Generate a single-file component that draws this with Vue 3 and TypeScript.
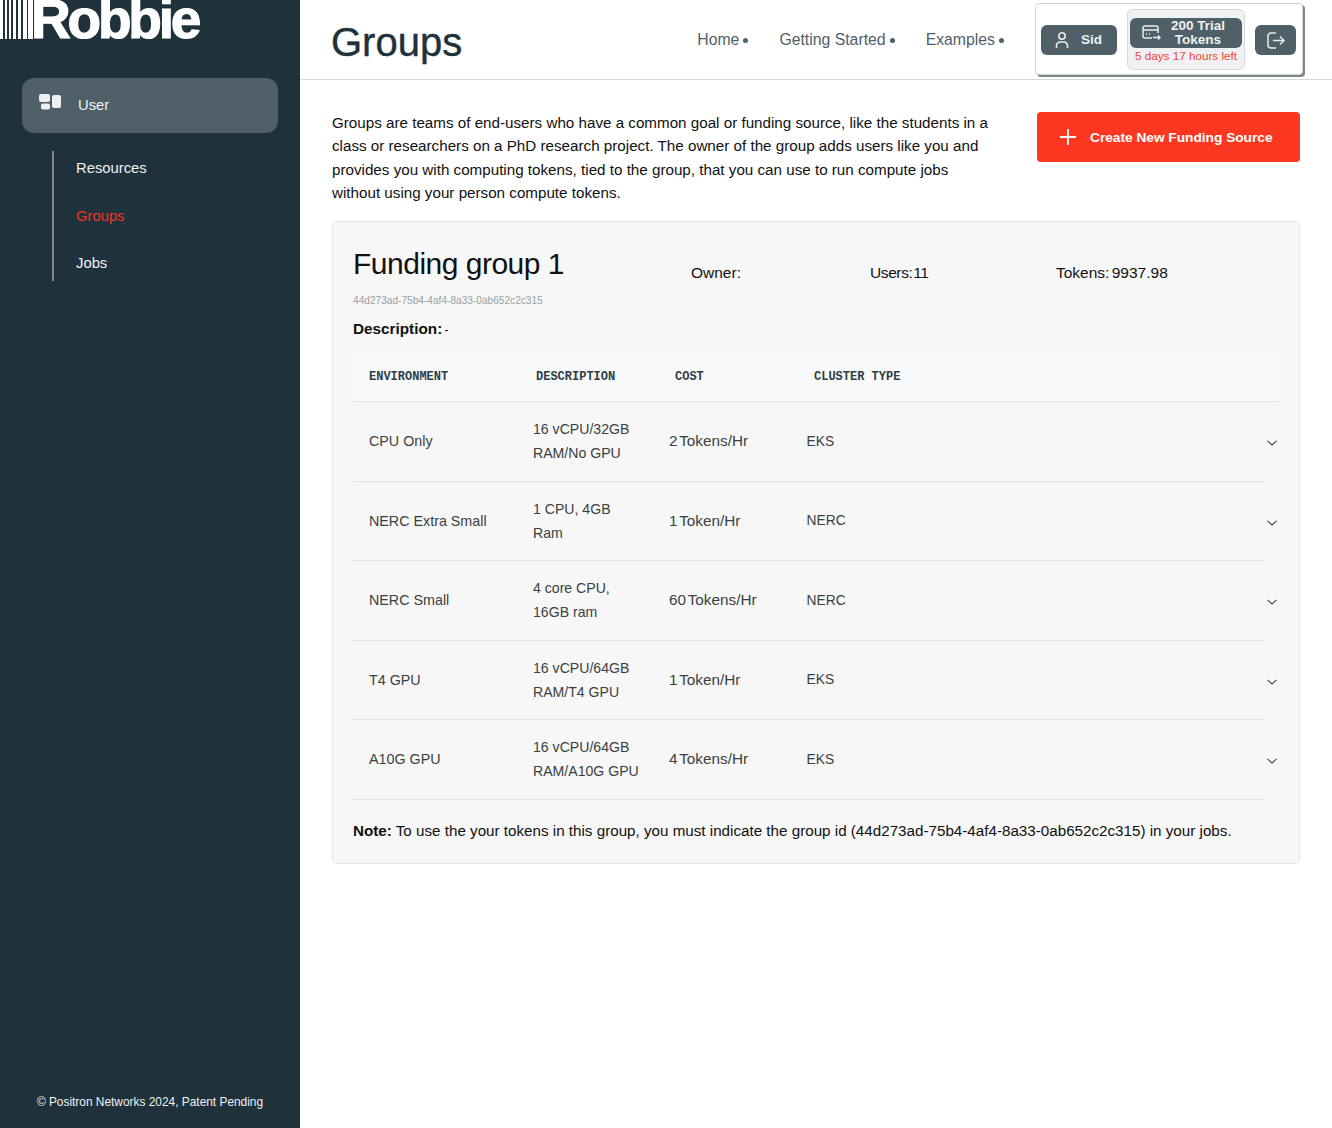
<script setup lang="ts">
interface Row { env: string; desc: string[]; cost: string; type: string }
const rows: Row[] = [
  { env: 'CPU Only', desc: ['16 vCPU/32GB', 'RAM/No GPU'], cost: '2 Tokens/Hr', type: 'EKS' },
  { env: 'NERC Extra Small', desc: ['1 CPU, 4GB', 'Ram'], cost: '1 Token/Hr', type: 'NERC' },
  { env: 'NERC Small', desc: ['4 core CPU,', '16GB ram'], cost: '60 Tokens/Hr', type: 'NERC' },
  { env: 'T4 GPU', desc: ['16 vCPU/64GB', 'RAM/T4 GPU'], cost: '1 Token/Hr', type: 'EKS' },
  { env: 'A10G GPU', desc: ['16 vCPU/64GB', 'RAM/A10G GPU'], cost: '4 Tokens/Hr', type: 'EKS' },
]
const stripes = [3, 2, 2, 2, 2, 2, 3, 2, 3, 2, 4, 1, 5]
</script>

<template>
  <div class="page">
    <aside class="sidebar">
      <div class="logo">
        <div class="bars"><i v-for="(w, i) in stripes" :key="i" :class="{ on: i % 2 === 1 }" :style="{ width: w + 'px' }"></i></div>
        <span class="logotext">Robbie</span>
      </div>
      <div class="usernav">
        <svg width="23" height="16" viewBox="0 0 23 16" fill="#eef0f1"><rect x="0" y="0" width="11" height="8" rx="2"/><rect x="2" y="9.500" width="9" height="6" rx="2"/><rect x="13" y="1" width="9" height="13" rx="2"/></svg>
        <span>User</span>
      </div>
      <nav class="subnav">
        <a>Resources</a>
        <a class="active">Groups</a>
        <a>Jobs</a>
      </nav>
      <div class="grow"></div>
      <footer class="copy">© Positron Networks 2024, Patent Pending</footer>
    </aside>

    <main class="main">
      <header class="topbar">
        <h1>Groups</h1>
        <nav class="links">
          <a>Home<b></b></a>
          <a>Getting Started<b></b></a>
          <a>Examples<b></b></a>
        </nav>
        <div class="account">
          <button class="dark sid">
            <svg width="16" height="18" viewBox="0 0 16 18" fill="none" stroke="#e8ecee" stroke-width="1.600"><circle cx="8" cy="5" r="3.200"/><path d="M2.500 17v-2.500a4 4 0 0 1 4-3.500h3a4 4 0 0 1 4 3.500V17"/></svg>
            <span>Sid</span>
          </button>
          <div class="trial">
            <button class="dark tokens">
              <svg width="19" height="16" viewBox="0 0 19 16" fill="none" stroke="#e8ecee" stroke-width="1.500"><path d="M10 13H3a2 2 0 0 1-2-2V3a2 2 0 0 1 2-2h11a2 2 0 0 1 2 2v5"/><path d="M1 5h15"/><path d="M4 9h1M7 9h1"/><path d="M11 12.500h7M16 10.500l2 2-2 2"/></svg>
              <span>200 Trial<br>Tokens</span>
            </button>
            <div class="left">5 days 17 hours left</div>
          </div>
          <button class="dark out">
            <svg width="18" height="17" viewBox="0 0 18 17" fill="none" stroke="#e8ecee" stroke-width="1.500"><path d="M9 1H4a3 3 0 0 0-3 3v9a3 3 0 0 0 3 3h5"/><path d="M6 8.500h11M13 4.500l4 4-4 4"/></svg>
          </button>
        </div>
      </header>

      <section class="content">
        <div class="intro">
          <p>Groups are teams of end-users who have a common goal or funding source, like the students in a class or researchers on a PhD research project. The owner of the group adds users like you and provides you with computing tokens, tied to the group, that you can use to run compute jobs without using your person compute tokens.</p>
          <button class="create">
            <svg width="16" height="16" viewBox="0 0 16 16" stroke="#fff" stroke-width="1.800"><path d="M8 0v16M0 8h16"/></svg>
            <span>Create New Funding Source</span>
          </button>
        </div>

        <div class="card">
          <div class="cardhead">
            <h2>Funding group 1</h2>
            <span class="owner">Owner:</span>
            <span class="users">Users: 11</span>
            <span class="tokenscount">Tokens: 9937.98</span>
          </div>
          <div class="uuid">44d273ad-75b4-4af4-8a33-0ab652c2c315</div>
          <div class="descr"><strong>Description:</strong> <small>-</small></div>

          <div class="thead">
            <span>ENVIRONMENT</span>
            <span>DESCRIPTION</span>
            <span>COST</span>
            <span>CLUSTER TYPE</span>
          </div>
          <div v-for="r in rows" :key="r.env" class="row">
            <span>{{ r.env }}</span>
            <span class="d"><template v-for="l in r.desc" :key="l">{{ l }}<br></template></span>
            <span class="c">{{ r.cost }}</span>
            <span class="t">{{ r.type }}</span>
            <svg class="chev" width="10" height="6" viewBox="0 0 10 6" fill="none" stroke="#444" stroke-width="1.100"><path d="M.5 .8 5 5 9.500 .8"/></svg>
          </div>
          <p class="note"><strong>Note:</strong> To use the your tokens in this group, you must indicate the group id (44d273ad-75b4-4af4-8a33-0ab652c2c315) in your jobs.</p>
        </div>
      </section>
    </main>
  </div>
</template>

<style>
html, body { margin: 0; background: #fff; }
</style>

<style scoped>
* { box-sizing: border-box; }
.page { display: flex; min-height: 1128px; font-family: "Liberation Sans", Arial, sans-serif; color: #1f313a; }
.sidebar { width: 300px; flex: none; background: #1f313a; display: flex; flex-direction: column; color: #f0f2f3; height: 1128px; }
.logo { height: 78px; display: flex; align-items: flex-start; overflow: hidden; }
.bars { display: flex; height: 39px; flex: none; background: #fff; }
.bars i { display: block; height: 100%; }
.bars i.on { background: #1f313a; }
.logotext { font: 700 55px/38px "Liberation Sans", sans-serif; color: #fff; letter-spacing: -3.200px; height: 39px; -webkit-text-stroke: 1.200px #fff; margin-left: -2px; }
.usernav { margin: 0 22px; height: 55px; border-radius: 12px; background: #4f6069; display: flex; align-items: center; padding: 0 0 2px 17px; gap: 16px; font-size: 14.800px; }
.usernav svg { margin-top: -5px; }
.subnav { margin: 18px 0 0 52px; height: 130px; border-left: 2px solid #7d878c; display: flex; flex-direction: column; padding-left: 22px; justify-content: space-between; font-size: 14.800px; }
.subnav a { line-height: 17px; padding: 9px 0; }
.subnav .active { color: #f0352a; }
.grow { flex: 1; }
.copy { font-size: 11.900px; text-align: center; padding-bottom: 19px; line-height: 14px; }

.main { flex: 1; min-width: 0; }
.topbar { height: 80px; border-bottom: 1px solid #d3d9dc; display: flex; padding: 3px 29px 0 31px; align-items: flex-start; }
.topbar h1 { margin: 16px 0 0; font-size: 40px; font-weight: 400; line-height: 46px; -webkit-text-stroke: .4px #1f313a; flex: 1; }
.links { display: flex; gap: 30px; margin: 24px 30px 0 0; font-size: 15.800px; color: #4f6069; line-height: 26px; }
.links b { display: inline-block; width: 5px; height: 5px; border-radius: 50%; background: #4f6069; margin: 0 1px 0 4px; vertical-align: 2px; }
.account { width: 268px; height: 72px; border: 1px solid #cfd5d8; border-radius: 4px; box-shadow: 2px 2px 0 #7f878b; display: flex; align-items: flex-start; padding: 5px; background: #fff; }
.dark { border: 0; border-radius: 6px; background: #4f6069; color: #eef0f1; font: 700 13.500px/14px "Liberation Sans", sans-serif; display: flex; align-items: center; padding: 0; }
.sid { width: 76px; height: 30px; margin: 16px 0 0; padding-left: 13px; gap: 11px; }
.trial { width: 118px; height: 61px; margin-left: 10px; background: #f0f1f2; border: 1px solid #d3d9dc; border-radius: 6px; padding: 8px 2px 0; }
.tokens { width: 112px; height: 30px; padding-left: 12px; gap: 3px; }
.tokens span { flex: 1; text-align: center; padding-right: 10px; }
.left { font-size: 11.700px; line-height: 16px; color: #f4423a; text-align: center; white-space: nowrap; }
.out { width: 41px; height: 30px; margin: 16px 0 0 10px; justify-content: center; }

.content { padding: 32px 32px 0; }
.intro { display: flex; justify-content: space-between; align-items: flex-start; }
.intro p { margin: -1px 0 0; width: 665px; font-size: 15.200px; line-height: 23.400px; color: #111; }
.create { width: 263px; height: 50px; border: 0; border-radius: 4px; background: #fe3820; color: #fff; display: flex; align-items: center; gap: 14px; padding-left: 23px; font: 700 13.700px "Liberation Sans", sans-serif; }
.card { margin-top: 16px; height: 643px; background: #f7f7f7; border: 1px solid #e4e6e7; border-radius: 6px; padding: 0 20px; color: #111; }
.cardhead { height: 61px; display: flex; align-items: flex-end; font-size: 15.500px; }
.cardhead h2 { margin: 23px 0 0; font-size: 30px; font-weight: 400; line-height: 38px; letter-spacing: -.5px; width: 338px; color: #111; align-self: flex-start; }
.cardhead span { line-height: 18px; margin-bottom: 1px; }
.owner { width: 179px; }
.users { width: 186px; word-spacing: -3px; letter-spacing: -.4px; }
.tokenscount { word-spacing: -2px; }
.uuid { margin-top: 11px; font-size: 10.150px; line-height: 14px; color: #9aa0a4; }
.descr { margin-top: 12px; font-size: 15.300px; line-height: 18px; word-spacing: -2px; }
.descr small { font-size: 12px; }
.thead { margin-top: 12px; height: 51.500px; padding: 2px 0 0 16px; background: #f8f9fa; border-bottom: 1px solid #e6e6e6; display: grid; grid-template-columns: 167px 139px 139px 1fr; align-items: center; font: 700 12px "Liberation Mono", monospace; color: #2f3d45; }
.row { position: relative; width: 911px; height: 79.500px; border-bottom: 1px solid #e4e4e4; display: grid; grid-template-columns: 164px 136px 137.500px 1fr; align-items: center; padding-left: 16px; font-size: 14.300px; color: #3a3f42; }
.row > span { margin-bottom: .5px; }
.d { line-height: 24px; font-size: 14.100px; }
.c { font-size: 15.300px; word-spacing: -2.300px; }
.t { font-size: 13.800px; }
.chev { position: absolute; left: 914px; top: 38px; }
.note { margin: 22.500px 0 0; font-size: 15.200px; line-height: 18px; white-space: nowrap; }
</style>
